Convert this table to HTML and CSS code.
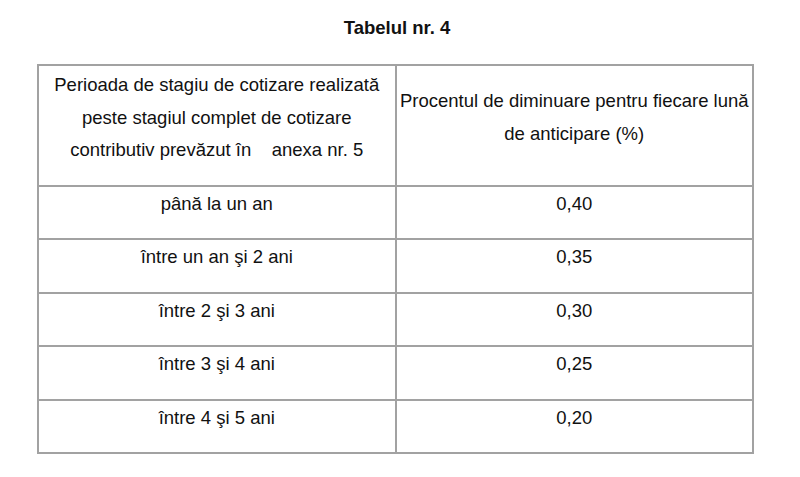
FILE: index.html
```html
<!DOCTYPE html>
<html lang="ro">
<head>
<meta charset="utf-8">
<title>Tabelul nr. 4</title>
<link rel="stylesheet" href="styles.css">
</head>
<body>
<h1 class="title">Tabelul nr. 4</h1>
<table class="grid">
  <tr class="head">
    <td>Perioada de stagiu de cotizare realizată peste stagiul complet de cotizare contributiv prevăzut în&nbsp;&nbsp;&nbsp;&nbsp;anexa nr. 5</td>
    <td>Procentul de diminuare pentru fiecare lună de anticipare (%)</td>
  </tr>
  <tr><td>până la un an</td><td>0,40</td></tr>
  <tr><td>între un an şi 2 ani</td><td>0,35</td></tr>
  <tr><td>între 2 şi 3 ani</td><td>0,30</td></tr>
  <tr><td>între 3 şi 4 ani</td><td>0,25</td></tr>
  <tr><td>între 4 şi 5 ani</td><td>0,20</td></tr>
</table>
</body>
</html>
```
FILE: styles.css
```css
html, body {
  margin: 0;
  padding: 0;
  background: #ffffff;
}
body {
  font-family: "Liberation Sans", Arial, sans-serif;
  color: #111111;
  font-size: 18.5px;
}
.title {
  margin: 0;
  padding-top: 17px;
  height: 64px;
  box-sizing: border-box;
  font-size: 18.5px;
  font-weight: bold;
  line-height: 22px;
  text-align: center;
  padding-right: 6px;
}
.grid {
  border-collapse: collapse;
  margin-left: 37px;
  width: 717px;
  table-layout: fixed;
}
.grid td {
  border: 2px solid #a2a2a2;
  text-align: center;
  vertical-align: middle;
  line-height: 32.5px;
  padding: 1px 2px 18px;
}
.grid .head td {
  padding: 3px 2px 18px;
}
```
